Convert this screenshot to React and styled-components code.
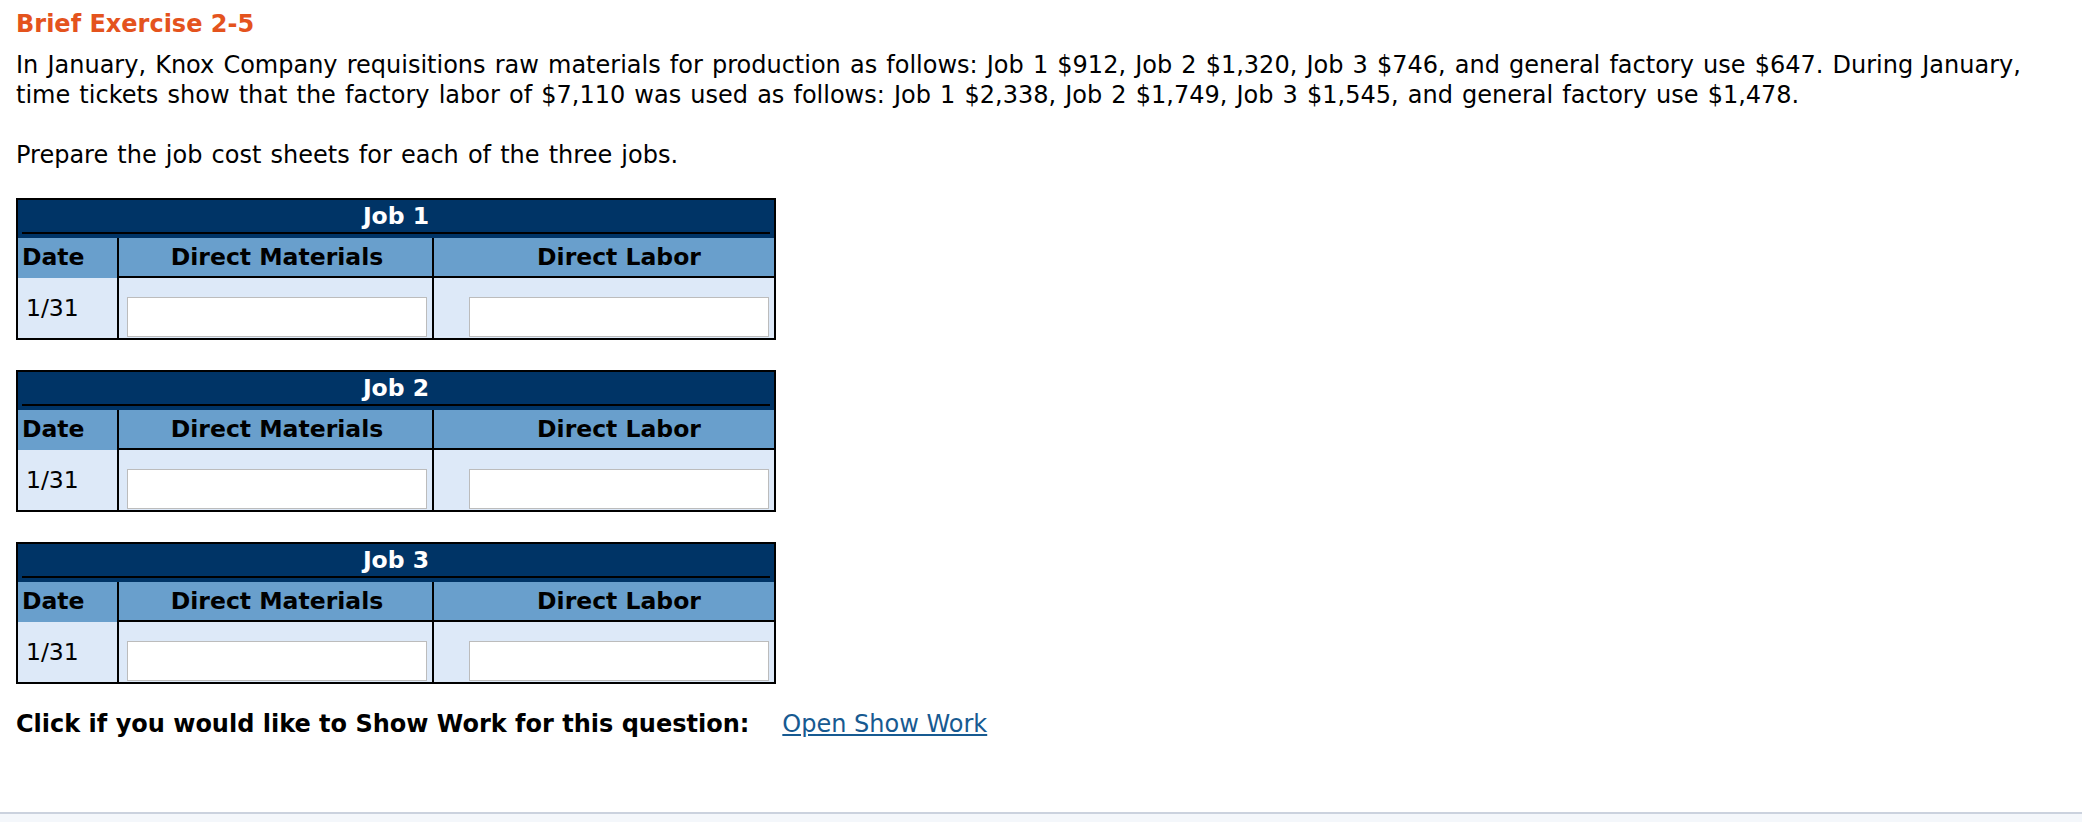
import React from "react";
import styled, { createGlobalStyle } from "styled-components";

const GlobalStyle = createGlobalStyle`
  html, body {
    margin: 0;
    padding: 0;
    background: #fff;
  }
  body {
    font-family: "DejaVu Sans", Verdana, sans-serif;
    color: #000;
  }
`;

const jobs = ["Job 1", "Job 2", "Job 3"];

export default function App() {
  return (
    <>
      <GlobalStyle />
      <Page>
        <Title>Brief Exercise 2-5</Title>
        <Question>
          In January, Knox Company requisitions raw materials for production as
          follows: Job 1 $912, Job 2 $1,320, Job 3 $746, and general factory use
          $647. During January, time tickets show that the factory labor of
          $7,110 was used as follows: Job 1 $2,338, Job 2 $1,749, Job 3 $1,545,
          and general factory use $1,478.
          <br />
          <br />
          Prepare the job cost sheets for each of the three jobs.
        </Question>

        <Sheets>
          {jobs.map((job) => (
            <Sheet key={job}>
              <JobBar>
                <JobName>{job}</JobName>
              </JobBar>
              <Grid>
                <DateHead>Date</DateHead>
                <HeadCell>
                  <HeadLabel>Direct Materials</HeadLabel>
                </HeadCell>
                <HeadCell>
                  <HeadLabel>Direct Labor</HeadLabel>
                </HeadCell>
                <DateCell>1/31</DateCell>
                <EntryCell>
                  <Entry type="text" aria-label={`${job} direct materials`} />
                </EntryCell>
                <EntryCell>
                  <Entry type="text" aria-label={`${job} direct labor`} />
                </EntryCell>
              </Grid>
            </Sheet>
          ))}
        </Sheets>

        <ShowWork>
          <strong>Click if you would like to Show Work for this question:</strong>
          <WorkLink href="#">Open Show Work</WorkLink>
        </ShowWork>
      </Page>
      <Footer />
    </>
  );
}

const Page = styled.main`
  padding: 9px 16px 0;
`;

const Title = styled.h1`
  margin: 0;
  font-size: 24px;
  line-height: 30px;
  font-weight: bold;
  color: #e4531d;
`;

const Question = styled.p`
  margin: 11px 0 0;
  padding-right: 6px;
  font-size: 24px;
  line-height: 30px;
  word-spacing: 1.5px;
`;

const Sheets = styled.div`
  margin-top: 28px;
  display: flex;
  flex-direction: column;
  gap: 30px;
`;

const Sheet = styled.div`
  width: 760px;
  box-sizing: border-box;
  border: 2px solid #000;
  font-size: 23.5px;
`;

const JobBar = styled.div`
  background: #003466;
  padding: 0 4px 4px;
`;

const JobName = styled.div`
  height: 32px;
  line-height: 32px;
  border-bottom: 2px solid #000;
  text-align: center;
  color: #fff;
  font-weight: bold;
`;

const Grid = styled.div`
  display: grid;
  grid-template-columns: 99px 315px 342px;
  grid-template-rows: 40px 60px;
`;

const DateHead = styled.div`
  background: #699fcc;
  font-weight: bold;
  line-height: 38px;
  padding-left: 4px;
`;

const HeadCell = styled.div`
  box-sizing: border-box;
  background: #699fcc;
  border-left: 2px solid #000;
  border-bottom: 2px solid #000;
  display: flex;
  justify-content: flex-end;
  padding-right: 5px;
`;

const HeadLabel = styled.span`
  width: 300px;
  text-align: center;
  font-weight: bold;
  line-height: 38px;
  white-space: nowrap;
`;

const DateCell = styled.div`
  background: #dde9f8;
  display: flex;
  align-items: center;
  padding-left: 8px;
`;

const EntryCell = styled.div`
  box-sizing: border-box;
  background: #dde9f8;
  border-left: 2px solid #000;
  display: flex;
  justify-content: flex-end;
  align-items: flex-end;
  padding: 0 5px 1px 0;
`;

const Entry = styled.input`
  box-sizing: border-box;
  width: 300px;
  height: 40px;
  margin: 0;
  padding: 2px 6px;
  border: 1px solid #bcbcbc;
  background: #fff;
  font: inherit;
  outline: none;
`;

const ShowWork = styled.div`
  margin-top: 25px;
  font-size: 24px;
  line-height: 30px;
  display: flex;
  align-items: baseline;
  gap: 33px;
`;

const WorkLink = styled.a`
  color: #175a91;
  text-decoration: underline;
`;

const Footer = styled.footer`
  margin-top: 73px;
  height: 40px;
  border-top: 2px solid #cbd2de;
  background: #f4f7fb;
`;
